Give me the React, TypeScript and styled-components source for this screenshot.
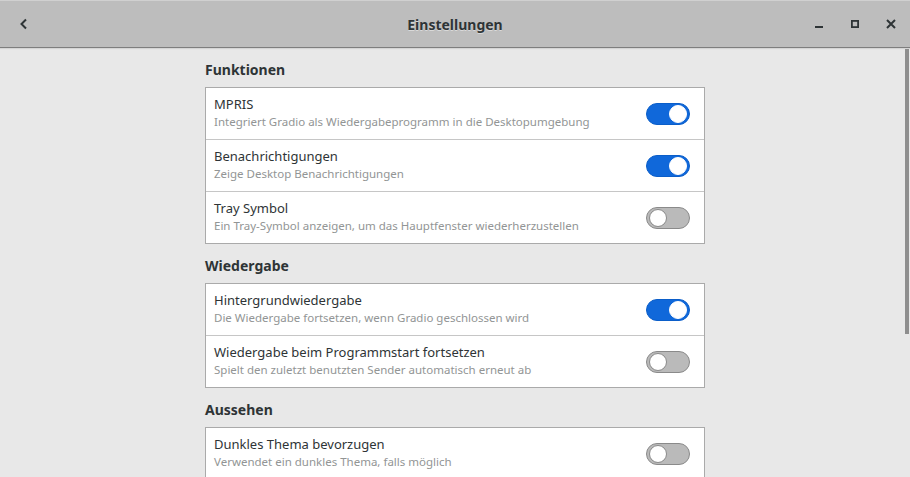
import React from 'react';
import styled, { createGlobalStyle } from 'styled-components';

const GlobalStyle = createGlobalStyle`
  html, body {
    margin: 0;
    padding: 0;
    background: #e8e8e8;
    font-family: "Noto Sans", "Open Sans", sans-serif;
    color: #2e3436;
  }
`;

const Window = styled.div`
  width: 910px;
  height: 477px;
  display: flex;
  flex-direction: column;
  background: #e8e8e8;
  overflow: hidden;
`;

const HeaderBar = styled.div`
  height: 46px;
  flex: none;
  display: grid;
  grid-template-columns: 1fr auto 1fr;
  align-items: center;
  background: #bdbdbd;
  border-top: 1px solid #d0d0d0;
  border-bottom: 1px solid #7e7e7e;
  box-shadow: 0 1px 1px rgba(0, 0, 0, 0.08);
`;

const Title = styled.div`
  font-size: 14px;
  font-weight: 700;
  color: #2e3436;
  text-shadow: 0 1px 0 rgba(255, 255, 255, 0.45);
`;

const IconButton = styled.button`
  width: 36px;
  height: 36px;
  border: none;
  background: transparent;
  display: flex;
  align-items: center;
  justify-content: center;
  padding: 0;
  color: #2e3436;
`;

const Left = styled.div`
  display: flex;
  padding-left: 6px;
`;

const Controls = styled.div`
  display: flex;
  justify-content: flex-end;
  padding-right: 1px;
`;

const Body = styled.div`
  flex: 1;
  display: flex;
  justify-content: center;
  position: relative;
`;

const Scrollbar = styled.div`
  position: absolute;
  right: 1px;
  top: 1px;
  width: 4px;
  height: 285px;
  background: #8e8e8e;
`;

const Column = styled.div`
  width: 500px;
  padding-top: 10px;
  display: flex;
  flex-direction: column;
`;

const SectionTitle = styled.h2`
  margin: 2px 0 7px 0;
  font-size: 14px;
  line-height: 20px;
  font-weight: 700;
  color: #2e3436;
`;

const Card = styled.div`
  background: #ffffff;
  border: 1px solid #aaaaaa;
  margin-bottom: 10px;
`;

const Row = styled.div`
  height: 51px;
  display: flex;
  align-items: center;
  padding: 0 14px 0 8px;
  & + & {
    border-top: 1px solid #c6c6c6;
  }
`;

const Text = styled.div`
  flex: 1;
  display: flex;
  flex-direction: column;
  gap: 1px;
  margin-top: -2px;
`;

const RowTitle = styled.div`
  font-size: 13px;
  line-height: 18px;
  color: #2e3436;
`;

const RowSub = styled.div`
  font-size: 11.5px;
  line-height: 16px;
  color: #929595;
`;

const Track = styled.div<{ $on: boolean }>`
  width: 44px;
  height: 22px;
  box-sizing: border-box;
  border-radius: 11px;
  border: 1px solid ${(p) => (p.$on ? '#0b5ec9' : '#8a8a8a')};
  background: ${(p) => (p.$on ? '#1068da' : '#bababa')};
  display: flex;
  align-items: center;
  justify-content: ${(p) => (p.$on ? 'flex-end' : 'flex-start')};
  padding: 0 2px;
`;

const Knob = styled.div<{ $on: boolean }>`
  width: 16px;
  height: 16px;
  border-radius: 50%;
  background: #ffffff;
  border: 1px solid ${(p) => (p.$on ? '#ffffff' : '#8a8a8a')};
`;

const Switch = ({ on }: { on: boolean }) => (
  <Track $on={on}>
    <Knob $on={on} />
  </Track>
);

type Item = { title: string; sub: string; on: boolean };

const sections: { name: string; items: Item[] }[] = [
  {
    name: 'Funktionen',
    items: [
      { title: 'MPRIS', sub: 'Integriert Gradio als Wiedergabeprogramm in die Desktopumgebung', on: true },
      { title: 'Benachrichtigungen', sub: 'Zeige Desktop Benachrichtigungen', on: true },
      { title: 'Tray Symbol', sub: 'Ein Tray-Symbol anzeigen, um das Hauptfenster wiederherzustellen', on: false },
    ],
  },
  {
    name: 'Wiedergabe',
    items: [
      { title: 'Hintergrundwiedergabe', sub: 'Die Wiedergabe fortsetzen, wenn Gradio geschlossen wird', on: true },
      { title: 'Wiedergabe beim Programmstart fortsetzen', sub: 'Spielt den zuletzt benutzten Sender automatisch erneut ab', on: false },
    ],
  },
  {
    name: 'Aussehen',
    items: [
      { title: 'Dunkles Thema bevorzugen', sub: 'Verwendet ein dunkles Thema, falls möglich', on: false },
    ],
  },
];

const App = () => (
  <Window>
    <GlobalStyle />
    <HeaderBar>
      <Left>
        <IconButton>
          <svg width="16" height="16" viewBox="0 0 16 16">
            <path d="M10 3.5 L5.5 8 L10 12.5" fill="none" stroke="#2e3436" strokeWidth="2" />
          </svg>
        </IconButton>
      </Left>
      <Title>Einstellungen</Title>
      <Controls>
        <IconButton>
          <svg width="16" height="16" viewBox="0 0 16 16">
            <rect x="4" y="10" width="8" height="2" fill="#2e3436" />
          </svg>
        </IconButton>
        <IconButton>
          <svg width="16" height="16" viewBox="0 0 16 16">
            <rect x="4.9" y="4.9" width="6.2" height="6.2" fill="none" stroke="#2e3436" strokeWidth="1.8" />
          </svg>
        </IconButton>
        <IconButton>
          <svg width="16" height="16" viewBox="0 0 16 16">
            <path d="M4 4 L12 12 M12 4 L4 12" stroke="#2e3436" strokeWidth="2" />
          </svg>
        </IconButton>
      </Controls>
    </HeaderBar>
    <Body>
      <Column>
        {sections.map((s) => (
          <React.Fragment key={s.name}>
            <SectionTitle>{s.name}</SectionTitle>
            <Card>
              {s.items.map((it) => (
                <Row key={it.title}>
                  <Text>
                    <RowTitle>{it.title}</RowTitle>
                    <RowSub>{it.sub}</RowSub>
                  </Text>
                  <Switch on={it.on} />
                </Row>
              ))}
            </Card>
          </React.Fragment>
        ))}
      </Column>
      <Scrollbar />
    </Body>
  </Window>
);

export default App;
